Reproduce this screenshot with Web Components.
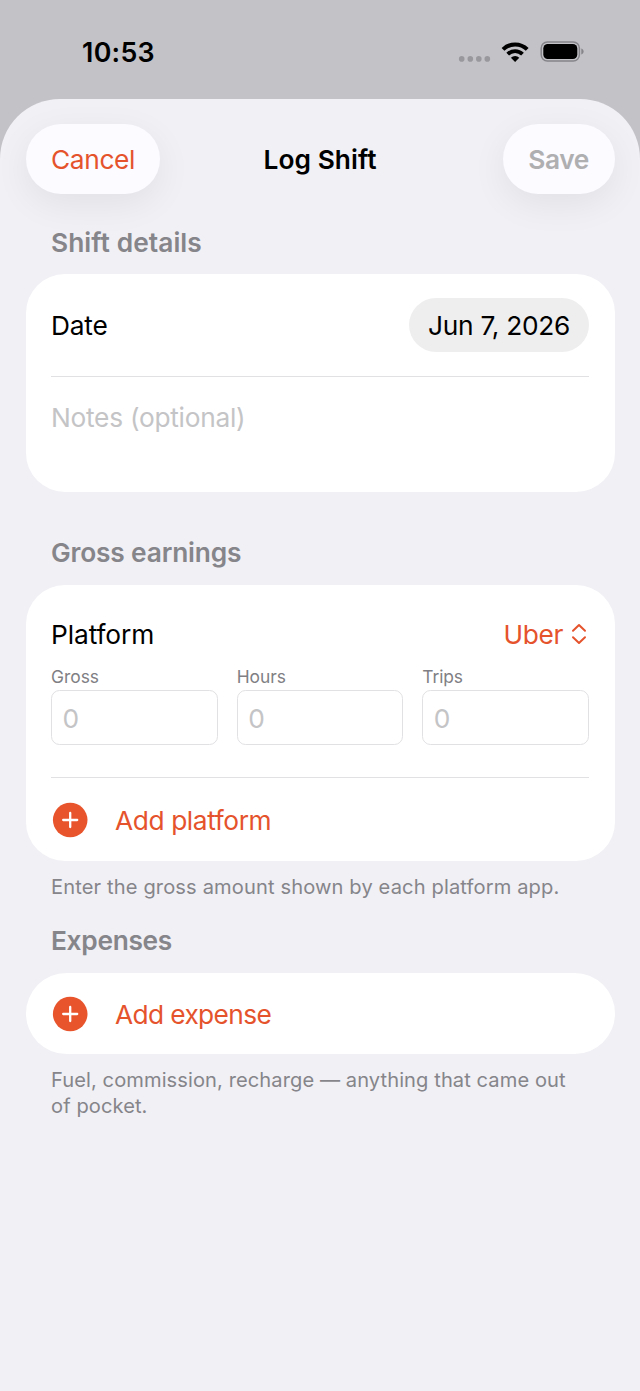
<!DOCTYPE html>
<html lang="en">
<head>
<meta charset="utf-8">
<title>Log Shift</title>
<style>
  html, body { margin: 0; padding: 0; }
  body {
    width: 640px; height: 1391px; overflow: hidden;
    background: #c3c2c7;
    font-family: Inter, "Liberation Sans", sans-serif;
    font-size: 26.3px;
    color: #000;
    --accent: #e5532d;
    --muted: #85858a;
    --placeholder: #c4c4c6;
    --line: #e1e1e3;
  }
</style>
</head>
<body>
<shift-app></shift-app>

<script>
const define = (name, html) => customElements.define(name, class extends HTMLElement {
  constructor() {
    super();
    const t = document.createElement('template');
    t.innerHTML = html;
    this.attachShadow({ mode: 'open' }).appendChild(t.content.cloneNode(true));
  }
});

define('status-bar', `
  <style>
    :host { display: flex; box-sizing: border-box; height: 98.5px; padding: 0 56px 0 82px; align-items: flex-start; justify-content: space-between; }
    .time { margin-top: 36px; font-size: 26.8px; line-height: 32px; font-weight: 590; letter-spacing: .3px; }
    svg { display: block; margin-top: 36px; }
  </style>
  <span class="time">10:53</span>
  <svg width="126" height="32" viewBox="458 36 126 32">
    <g fill="#99999d"><circle cx="461.7" cy="58.9" r="2.8"/><circle cx="470.3" cy="58.9" r="2.8"/><circle cx="478.8" cy="58.9" r="2.8"/><circle cx="487.3" cy="58.9" r="2.8"/></g>
    <g fill="none" stroke="#000" stroke-width="4">
      <path d="M503 49.4a17.3 17.3 0 0 1 24.2 0"/>
      <path d="M507.7 54.2a10.5 10.5 0 0 1 14.8 0" stroke-width="3.8"/>
    </g>
    <path d="M515.1 61.9l-4.2-4.200a6 6 0 0 1 8.400 0z"/>
    <rect x="541.2" y="42" width="38.2" height="19" rx="6.2" fill="none" stroke="#858489" stroke-width="1.5"/>
    <rect x="543.3" y="44" width="34" height="15" rx="4.4"/>
    <path d="M581.3 48.6c1.5.5 2.3 1.6 2.3 3s-.8 2.5-2.3 3z" fill="#858489"/>
  </svg>`);

define('glass-button', `
  <style>
    :host { display: flex; box-sizing: border-box; height: 70px; padding: 2px 25.5px 0; align-items: center; justify-content: center; border-radius: 35px; background: #fcfbff; box-shadow: 0 10px 36px rgba(0,0,0,.065); line-height: 32px; white-space: nowrap; }
  </style><slot></slot>`);

define('sheet-header', `
  <style>
    :host { display: grid; grid-template-columns: 1fr auto 1fr; align-items: center; height: 70px; }
    ::slotted([slot=leading]) { justify-self: start; }
    ::slotted([slot=trailing]) { justify-self: end; }
    h1 { margin: 0; padding-top: 2px; font-size: inherit; font-weight: 590; line-height: 32px; letter-spacing: .05px; }
  </style>
  <slot name="leading"></slot><h1><slot></slot></h1><slot name="trailing"></slot>`);

define('form-section', `
  <style>
    :host { display: block; }
    .head { display: block; padding-left: 25.5px; line-height: 32px; font-weight: 590; color: var(--muted); letter-spacing: var(--head-spacing, 0); }
    .card { box-sizing: border-box; margin-top: var(--head-gap, 16px); height: var(--card-height); padding: 0 25.5px; background: #fff; border-radius: var(--card-radius, 39px); overflow: hidden; }
    .foot { display: block; padding: 14.1px 25.5px 0; font-size: 20.1px; line-height: 25.6px; color: var(--muted); letter-spacing: .13px; }
  </style>
  <span class="head"><slot name="head"></slot></span>
  <div class="card"><slot></slot></div>
  <slot name="foot" class="foot"></slot>`);

define('form-row', `
  <style>
    :host { display: flex; box-sizing: border-box; align-items: center; justify-content: space-between; line-height: 32px; }
    :host([divided]) { border-bottom: 1.5px solid var(--line); }
  </style><slot></slot>`);

define('date-pill', `
  <style>
    :host { display: flex; box-sizing: border-box; width: 180px; height: 54px; padding-top: 1px; align-items: center; justify-content: center; background: #eeeeef; border-radius: 27px; letter-spacing: -.27px; }
  </style><slot></slot>`);

define('menu-picker', `
  <style>
    :host { display: flex; align-items: center; gap: 8px; color: var(--accent); letter-spacing: -.33px; }
    svg { display: block; margin: -2px 2px 0 0; }
  </style><slot></slot>
  <svg width="16" height="22" viewBox="0 0 16 22" fill="none" stroke="currentColor" stroke-width="2" stroke-linecap="round" stroke-linejoin="round"><path d="M2 7.8L8 2l6 5.8M2 14.2L8 20l6-5.8"/></svg>`);

define('number-field', `
  <style>
    :host { display: block; flex: 1; }
    .label { display: block; font-size: 17.4px; line-height: 22px; color: #7f7f84; }
    .box { box-sizing: border-box; display: flex; align-items: center; height: 54.5px; margin-top: 2px; padding: 2px 0 0 10.5px; border: 1.5px solid var(--line); border-radius: 8.5px; line-height: 32px; color: var(--placeholder); }
  </style>
  <span class="label"><slot></slot></span>
  <div class="box"><span>0</span></div>`);

define('add-button', `
  <style>
    :host { display: flex; align-items: center; gap: 27px; padding-left: 1px; color: var(--accent); line-height: 32px; }
    svg { display: block; }
    span { padding-top: 2.2px; }
  </style>
  <svg width="36" height="36" viewBox="0 0 36 36"><circle cx="18.2" cy="18" r="17.3" fill="#e8552d"/><path d="M18.2 11v14M11.2 18h14" stroke="#fff" stroke-width="2.3" stroke-linecap="round"/></svg>
  <span><slot></slot></span>`);

define('shift-app', `
  <style>
    :host { display: flex; flex-direction: column; height: 1391px; }
    .sheet { flex: 1; box-sizing: border-box; padding: 25.5px 25.5px 0; background: #f1f0f5; border-radius: 60px 60px 0 0; }
    .fields { display: flex; gap: 19px; }
    .cancel { color: var(--accent); letter-spacing: -.37px; padding-right: 24.8px; }
    .save { color: #afafb1; font-weight: 590; letter-spacing: -.36px; }
    .details { margin-top: 33.3px; --head-gap: 15.2px; --card-height: 217.5px; --head-spacing: .07px; }
    .earnings { margin-top: 30.9px; --card-height: 276px; --head-spacing: -.17px; }
    .expenses { margin-top: 24.1px; --card-height: 81.5px; --card-radius: 41px; --head-spacing: -.3px; }
    .date { height: 102.5px; }
    .date > span { padding-top: 1px; }
    .notes { height: 82px; color: var(--placeholder); letter-spacing: -.27px; }
    .platform { height: 101px; margin-bottom: -19.5px; }
    .platform > span { margin-top: -1px; }
    .group { height: 193px; flex-direction: column; align-items: stretch; justify-content: flex-start; }
    .add { height: 84px; letter-spacing: -.4px; }
    .add2 { height: 81.5px; letter-spacing: -.62px; }
  </style>
  <status-bar></status-bar>
  <main class="sheet">
    <sheet-header>
      <glass-button slot="leading" class="cancel">Cancel</glass-button>
      Log Shift
      <glass-button slot="trailing" class="save">Save</glass-button>
    </sheet-header>

    <form-section class="details">
      <span slot="head">Shift details</span>
      <form-row class="date" divided><span style="letter-spacing:-.2px">Date</span><date-pill>Jun 7, 2026</date-pill></form-row>
      <form-row class="notes">Notes (optional)</form-row>
    </form-section>

    <form-section class="earnings">
      <span slot="head">Gross earnings</span>
      <form-row class="group" divided>
        <form-row class="platform"><span style="letter-spacing:-.1px">Platform</span><menu-picker>Uber</menu-picker></form-row>
        <div class="fields"><number-field>Gross</number-field><number-field>Hours</number-field><number-field style="letter-spacing:-.1px">Trips</number-field></div>
      </form-row>
      <add-button class="add">Add platform</add-button>
      <span slot="foot">Enter the gross amount shown by each platform app.</span>
    </form-section>

    <form-section class="expenses">
      <span slot="head">Expenses</span>
      <add-button class="add2">Add expense</add-button>
      <span slot="foot" style="letter-spacing:.085px">Fuel, commission, recharge — anything that came out<br>of pocket.</span>
    </form-section>
  </main>`);
</script>
</body>
</html>
